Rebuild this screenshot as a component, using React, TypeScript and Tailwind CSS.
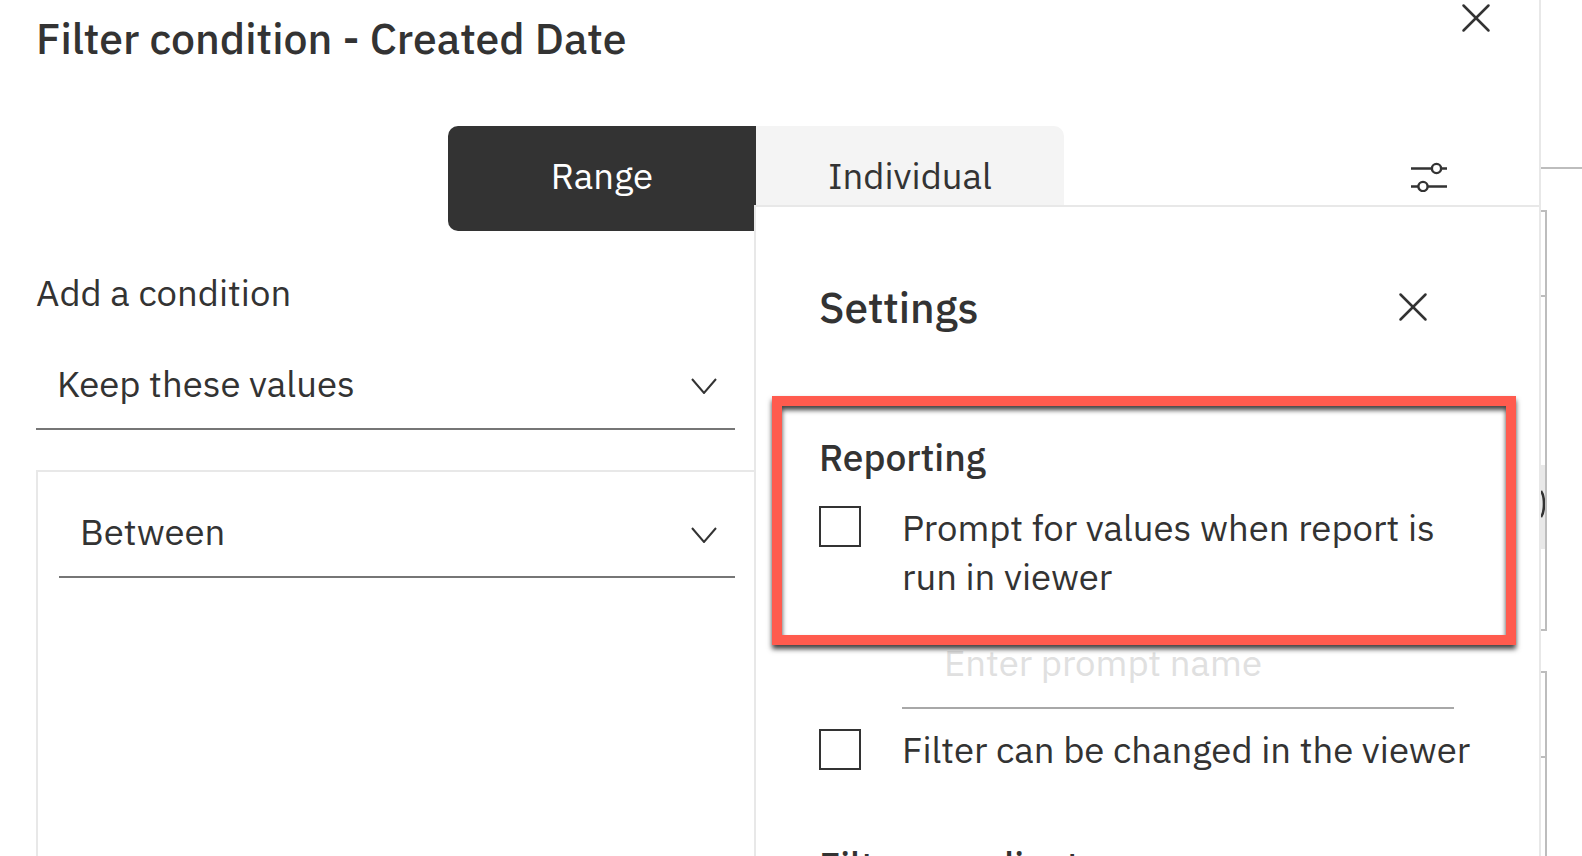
import React from 'react';
import { X } from 'lucide-react';

const Chevron = () => (
  <svg className="mr-[18px] mt-[5px]" width="26" height="16" viewBox="0 0 26 16" fill="none" stroke="#333" strokeWidth="2">
    <path d="M1 1l12 14L25 1" />
  </svg>
);

const Dropdown = ({ label, className }: { label: string; className: string }) => (
  <div className={`flex items-center justify-between border-b-2 border-[#767676] ${className}`}>
    <span className="text-[36.5px] leading-[48px] text-[#333]">{label}</span>
    <Chevron />
  </div>
);

const Checkbox = () => <div className="h-[41px] w-[42px] shrink-0 border-2 border-[#333]" />;

const SlidersIcon = () => (
  <svg width="38" height="30" viewBox="0 0 38 30" fill="none" stroke="#333" strokeWidth="2.4">
    <path d="M1 6.5h21M31 6.5h6M1 24.5h7M17 24.5h20" />
    <circle cx="26.5" cy="6.5" r="4.6" />
    <circle cx="13" cy="24.5" r="4.6" />
  </svg>
);

// strip of the page behind the modal, only a few pixels of it show
const PageBehind = () => (
  <div className="flex-1">
    <div className="mt-[167px] h-[2px] bg-[#bdbdbd]" />
    <div className="mt-[41px] h-[421px] w-[6px] border-y-2 border-r-2 border-[#bdbdbd]">
      <div className="h-[85px] border-b-2 border-[#bdbdbd]" />
      <div className="h-[168px]" />
      <div className="flex h-[84px] w-[4px] items-center bg-[#e8e8e8] pb-[6px]">
        <svg width="4" height="28" viewBox="0 0 4 28" fill="none" stroke="#333" strokeWidth="2.6">
          <path d="M0 1c3 4 3 8 3 13s0 9-3 13" />
        </svg>
      </div>
    </div>
    <div className="mt-[40px] h-[200px] w-[6px] border-t-2 border-r-2 border-[#bdbdbd]">
      <div className="h-[85px] border-b-2 border-[#bdbdbd]" />
    </div>
  </div>
);

export default function App() {
  return (
    <div className='relative flex h-[856px] overflow-hidden bg-white font-["IBM_Plex_Sans","Noto_Sans",sans-serif]'>
      <div className="h-full w-[1541px] shrink-0 border-r-2 border-[#e8e8e8] pl-[36px]">
        <div className="flex h-[126px] justify-between">
          <h1 className="text-[42.8px] font-medium leading-[76px] text-[#333]">Filter condition - Created Date</h1>
          <X className="mr-[38px] -mt-[7px] h-[50px] w-[50px] text-[#333]" strokeWidth={1.2} />
        </div>

        <div className="flex pl-[412px]">
          <div className="flex h-[105px] w-[308px] items-center justify-center rounded-l-[10px] bg-[#333] pb-[4px] text-[36.5px] text-white">
            Range
          </div>
          <div className="flex h-[80px] w-[308px] items-center justify-center rounded-tr-[10px] bg-[#f4f4f4] pt-[20px] text-[36.5px] text-[#333]">
            Individual
          </div>
          <div className="ml-[346px] mt-[36px]">
            <SlidersIcon />
          </div>
        </div>

        <div className="mt-[38px] text-[36.5px] leading-[48px] text-[#333]">Add a condition</div>
        <Dropdown label="Keep these values" className="mt-[38px] h-[75px] w-[699px] pb-[16px] pl-[21px]" />

        <div className="mt-[40px] h-[500px] w-[730px] border-l-2 border-t-2 border-[#e8e8e8] pl-[21px] pt-[30px]">
          <Dropdown label="Between" className="h-[76px] w-[676px] pb-[14px] pl-[21px]" />
        </div>
      </div>
      <PageBehind />

      {/* settings flyout sits over the filter form */}
      <div className="absolute left-[754px] top-[205px] h-[660px] w-[787px] border-x-2 border-t-2 border-[#e8e8e8] bg-white pl-[63px]">
        <div className="mt-[60px] flex h-[80px] items-center justify-between pr-[101px]">
          <h2 className="mt-[2px] text-[42.5px] font-medium text-[#333]">Settings</h2>
          <X className="h-[50px] w-[50px] text-[#333]" strokeWidth={1.2} />
        </div>
        <div className="mt-[86px] text-[37.2px] font-medium leading-[48px] text-[#333]">Reporting</div>
        <div className="mt-[25px] flex gap-[41px]">
          <Checkbox />
          <div className="-mt-[2px] w-[590px] text-[36.5px] leading-[48.5px] text-[#333]">Prompt for values when report is run in viewer</div>
        </div>
        <div className="ml-[83px] mt-[38px] w-[552px] border-b-2 border-[#a8a8a8] pb-[20px] pl-[42px] text-[36.5px] leading-[48px] text-[#e0e0e0]">
          Enter prompt name
        </div>
        <div className="mt-[16px] flex items-center gap-[41px]">
          <Checkbox />
          <div className="whitespace-nowrap pt-[1px] text-[36.5px] leading-[48px] text-[#333]">Filter can be changed in the viewer</div>
        </div>
        <div className="mt-[67px] text-[37.2px] font-medium leading-[48px] text-[#333]">Filter coordinates</div>
      </div>

      {/* red annotation box */}
      <div className="absolute left-[772px] top-[396px] h-[249px] w-[744px] border-[10px] border-[#ff5b4e] shadow-[0_4px_5px_rgba(0,0,0,0.75),inset_0_4px_5px_rgba(0,0,0,0.75)]" />
    </div>
  );
}
